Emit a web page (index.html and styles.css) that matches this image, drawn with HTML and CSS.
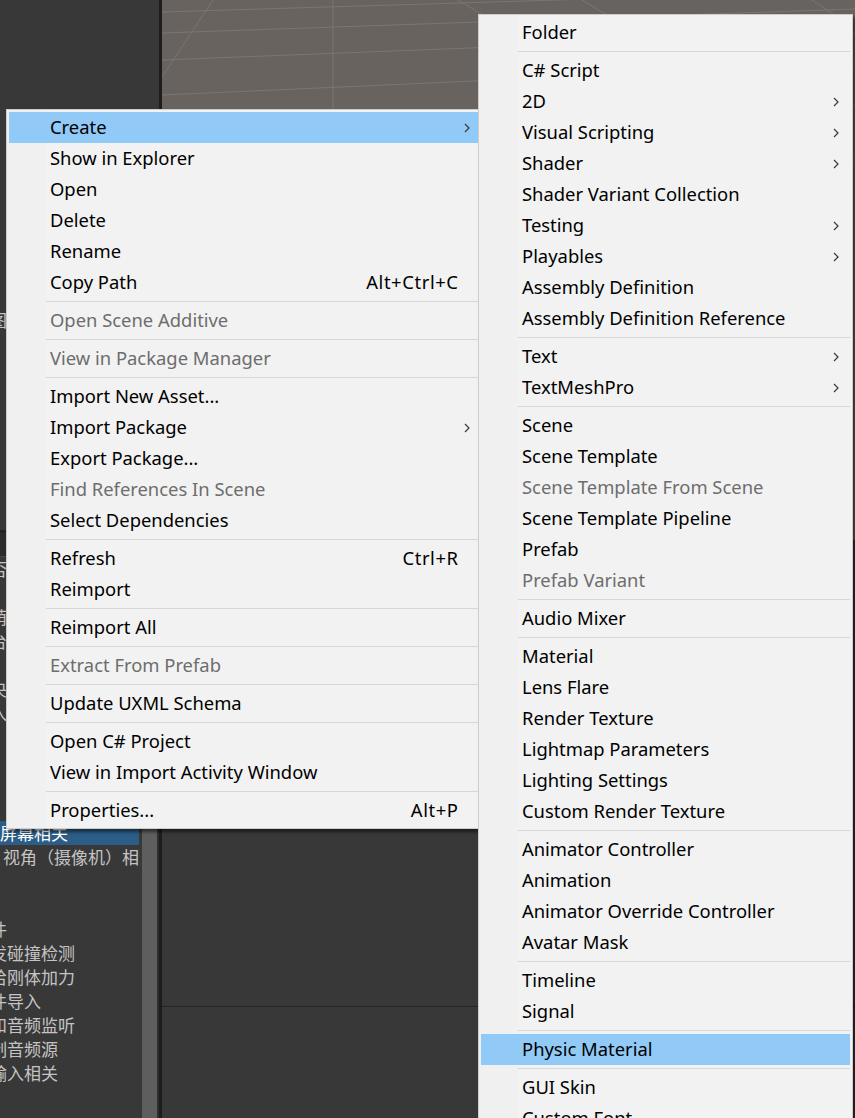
FILE: index.html
```html
<!DOCTYPE html>
<html lang="en">
<head>
<meta charset="utf-8">
<title>Unity Project – Create menu</title>
<link rel="stylesheet" href="styles.css">
</head>
<body>
<div class="app">
  <aside class="left-pane">
    <div class="top-area">
      <div class="tree-row cut">图层</div>
    </div>
    <div class="pane-bar"></div>
    <div class="pane-head"></div>
    <div class="project">
      <div class="tree">
        <div class="tree-row cut">否则</div>
        <div class="tree-row cut">，</div>
        <div class="tree-row cut">萌新</div>
        <div class="tree-row cut">台</div>
        <div class="tree-row"></div>
        <div class="tree-row cut">央</div>
        <div class="tree-row cut">入</div>
        <div class="tree-row"></div>
        <div class="tree-row"></div>
        <div class="tree-row"></div>
        <div class="tree-row"></div>
        <div class="tree-row selected">屏幕相关</div>
        <div class="tree-row shift">视角（摄像机）相关</div>
        <div class="tree-row"></div>
        <div class="tree-row"></div>
        <div class="tree-row cut">件</div>
        <div class="tree-row cut">发碰撞检测</div>
        <div class="tree-row cut">给刚体加力</div>
        <div class="tree-row cut">件导入</div>
        <div class="tree-row cut">和音频监听</div>
        <div class="tree-row cut">制音频源</div>
        <div class="tree-row cut">输入相关</div>
        <div class="tree-row"></div>
      </div>
      <div class="gap"></div>
      <div class="scrollbar"></div>
      <div class="edge"></div>
    </div>
  </aside>
  <div class="divider"></div>
  <main class="right-area">
    <div class="scene">
      <svg class="grid" viewBox="0 0 693 540" preserveAspectRatio="none">
        <path d="M0 12 L693 -9 M0 33 L693 9 M0 60 L693 33 M0 95 L693 64 M0 140 L693 105 M0 200 L693 160 M171 0 L171 540 M0 77 L51 0 M296 0 L420 75 M420 0 L470 30 M650 0 L680 20"/>
      </svg>
    </div>
    <div class="lower-top"></div>
    <div class="lower-bottom"></div>
  </main>
</div>

<div class="menu menu-context">
  <div class="item selected"><span class="label">Create</span><svg class="arrow" viewBox="0 0 6 10"><path d="M1 1l4 4-4 4"/></svg></div>
  <div class="item"><span class="label">Show in Explorer</span></div>
  <div class="item"><span class="label">Open</span></div>
  <div class="item"><span class="label">Delete</span></div>
  <div class="item"><span class="label">Rename</span></div>
  <div class="item"><span class="label">Copy Path</span><span class="shortcut">Alt+Ctrl+C</span></div>
  <div class="sep"></div>
  <div class="item disabled"><span class="label">Open Scene Additive</span></div>
  <div class="sep"></div>
  <div class="item disabled"><span class="label">View in Package Manager</span></div>
  <div class="sep"></div>
  <div class="item"><span class="label">Import New Asset...</span></div>
  <div class="item"><span class="label">Import Package</span><svg class="arrow" viewBox="0 0 6 10"><path d="M1 1l4 4-4 4"/></svg></div>
  <div class="item"><span class="label">Export Package...</span></div>
  <div class="item disabled"><span class="label">Find References In Scene</span></div>
  <div class="item"><span class="label">Select Dependencies</span></div>
  <div class="sep"></div>
  <div class="item"><span class="label">Refresh</span><span class="shortcut">Ctrl+R</span></div>
  <div class="item"><span class="label">Reimport</span></div>
  <div class="sep"></div>
  <div class="item"><span class="label">Reimport All</span></div>
  <div class="sep"></div>
  <div class="item disabled"><span class="label">Extract From Prefab</span></div>
  <div class="sep"></div>
  <div class="item"><span class="label">Update UXML Schema</span></div>
  <div class="sep"></div>
  <div class="item"><span class="label">Open C# Project</span></div>
  <div class="item"><span class="label">View in Import Activity Window</span></div>
  <div class="sep"></div>
  <div class="item"><span class="label">Properties...</span><span class="shortcut">Alt+P</span></div>
</div>

<div class="menu menu-create">
  <div class="item"><span class="label">Folder</span></div>
  <div class="sep"></div>
  <div class="item"><span class="label">C# Script</span></div>
  <div class="item"><span class="label">2D</span><svg class="arrow" viewBox="0 0 6 10"><path d="M1 1l4 4-4 4"/></svg></div>
  <div class="item"><span class="label">Visual Scripting</span><svg class="arrow" viewBox="0 0 6 10"><path d="M1 1l4 4-4 4"/></svg></div>
  <div class="item"><span class="label">Shader</span><svg class="arrow" viewBox="0 0 6 10"><path d="M1 1l4 4-4 4"/></svg></div>
  <div class="item"><span class="label">Shader Variant Collection</span></div>
  <div class="item"><span class="label">Testing</span><svg class="arrow" viewBox="0 0 6 10"><path d="M1 1l4 4-4 4"/></svg></div>
  <div class="item"><span class="label">Playables</span><svg class="arrow" viewBox="0 0 6 10"><path d="M1 1l4 4-4 4"/></svg></div>
  <div class="item"><span class="label">Assembly Definition</span></div>
  <div class="item"><span class="label">Assembly Definition Reference</span></div>
  <div class="sep"></div>
  <div class="item"><span class="label">Text</span><svg class="arrow" viewBox="0 0 6 10"><path d="M1 1l4 4-4 4"/></svg></div>
  <div class="item"><span class="label">TextMeshPro</span><svg class="arrow" viewBox="0 0 6 10"><path d="M1 1l4 4-4 4"/></svg></div>
  <div class="sep"></div>
  <div class="item"><span class="label">Scene</span></div>
  <div class="item"><span class="label">Scene Template</span></div>
  <div class="item disabled"><span class="label">Scene Template From Scene</span></div>
  <div class="item"><span class="label">Scene Template Pipeline</span></div>
  <div class="item"><span class="label">Prefab</span></div>
  <div class="item disabled"><span class="label">Prefab Variant</span></div>
  <div class="sep"></div>
  <div class="item"><span class="label">Audio Mixer</span></div>
  <div class="sep"></div>
  <div class="item"><span class="label">Material</span></div>
  <div class="item"><span class="label">Lens Flare</span></div>
  <div class="item"><span class="label">Render Texture</span></div>
  <div class="item"><span class="label">Lightmap Parameters</span></div>
  <div class="item"><span class="label">Lighting Settings</span></div>
  <div class="item"><span class="label">Custom Render Texture</span></div>
  <div class="sep"></div>
  <div class="item"><span class="label">Animator Controller</span></div>
  <div class="item"><span class="label">Animation</span></div>
  <div class="item"><span class="label">Animator Override Controller</span></div>
  <div class="item"><span class="label">Avatar Mask</span></div>
  <div class="sep"></div>
  <div class="item"><span class="label">Timeline</span></div>
  <div class="item"><span class="label">Signal</span></div>
  <div class="sep"></div>
  <div class="item selected"><span class="label">Physic Material</span></div>
  <div class="sep"></div>
  <div class="item"><span class="label">GUI Skin</span></div>
  <div class="item"><span class="label">Custom Font</span></div>
  <div class="item"><span class="label">UI Toolkit</span><svg class="arrow" viewBox="0 0 6 10"><path d="M1 1l4 4-4 4"/></svg></div>
</div>
</body>
</html>
```

FILE: styles.css
```css
* { box-sizing: border-box; }

html, body {
  margin: 0;
  padding: 0;
}

body {
  width: 855px;
  height: 1118px;
  overflow: hidden;
  position: relative;
  background: #383838;
  font-family: "Noto Sans", "Noto Sans CJK SC", sans-serif;
}

/* ---------- background editor ---------- */
.app {
  display: grid;
  grid-template-columns: 159px 3px 1fr;
  height: 1118px;
}

.left-pane {
  display: grid;
  grid-template-rows: 530px 3px 24px 1fr;
  background: #383838;
  min-height: 0;
}

.top-area {
  padding-top: 308px;
  overflow: hidden;
}

.pane-bar { background: #232323; }
.pane-head { background: #2c2c2c; border-bottom: 1px solid #474747; }

.project {
  display: grid;
  grid-template-columns: 139px 3px 15px 2px;
  min-height: 0;
  overflow: hidden;
}

.tree { overflow: hidden; }

.tree-row {
  height: 24px;
  line-height: 24px;
  font-family: "Noto Sans CJK SC", sans-serif;
  font-size: 17px;
  color: #c4c4c4;
  white-space: nowrap;
  overflow: hidden;
}

.tree-row.cut { text-indent: -10px; }
.tree-row.shift { padding-left: 3px; }
.tree-row.selected { background: #2c5d87; color: #ffffff; }

.gap { background: #383838; }
.scrollbar { background: #5e5e5e; }
.edge { background: #2e2e2e; }

.divider { background: #1d1d1d; }

.right-area {
  display: grid;
  grid-template-rows: 540px 467px 1fr;
  min-height: 0;
}

.scene {
  background: #696360;
  overflow: hidden;
}

.grid {
  display: block;
  width: 100%;
  height: 100%;
}

.grid path {
  fill: none;
  stroke: #7c7672;
  stroke-width: 1;
}

.lower-top {
  background: #383838;
  border-bottom: 1px solid #252525;
}

.lower-bottom { background: #383838; }

/* ---------- context menus ---------- */
.menu {
  position: absolute;
  padding: 2px;
  border: 1px solid #cdcdcd;
  background: linear-gradient(to right, #f0f0f0 39px, #f2f2f2 39px);
  box-shadow: 3px 3px 3px rgba(0, 0, 0, 0.5);
  font-family: "Noto Sans", sans-serif;
  font-size: 18.4px;
  color: #000;
}

.menu-context {
  left: 6px;
  top: 109px;
  width: 478px;
  z-index: 1;
}

.menu-create {
  left: 478px;
  top: 14px;
  width: 375px;
  z-index: 2;
}

.item {
  display: flex;
  align-items: center;
  height: 31px;
  padding: 0 23px 2px 41px;
  white-space: nowrap;
}

.item.selected { background: #91c9f7; }
.item.disabled { color: #6d6d6d; }

.label { flex: 1 1 auto; }

.shortcut {
  margin-left: 24px;
  letter-spacing: 0.6px;
  margin-right: -0.6px;
}

.arrow {
  width: 6px;
  height: 10px;
  margin-right: -12px;
  margin-top: 2px;
  flex: none;
}

.arrow path {
  fill: none;
  stroke: #3a3a3a;
  stroke-width: 1.2;
}

.sep {
  height: 1px;
  margin: 3px 0 3px 37px;
  background: #d7d7d7;
}
```
